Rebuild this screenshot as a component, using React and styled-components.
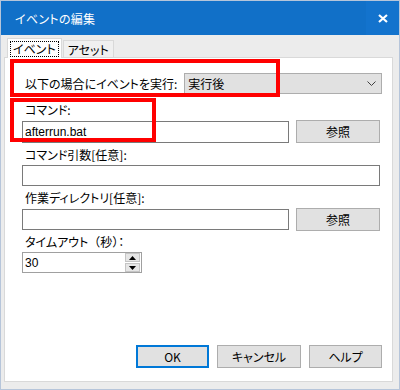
import React from "react";
import styled, { createGlobalStyle } from "styled-components";

const Global = createGlobalStyle`
  html, body { margin: 0; padding: 0; background: #ffffff; }
  body { font-family: "Noto Sans CJK JP", "Noto Sans", sans-serif; font-size: 12px; color: #000; }
  * { box-sizing: border-box; }
`;

const Window = styled.div`
  width: 400px;
  height: 390px;
  border: 1px solid #b6c5da;
  background: #ececec;
  display: flex;
  flex-direction: column;
`;

const TitleBar = styled.div`
  height: 34px;
  background: #1170c8;
  display: flex;
  align-items: center;
  justify-content: space-between;
  flex-shrink: 0;
`;

const Title = styled.div`
  color: #ffffff;
  font-size: 12px;
  padding-left: 14px;
  font-feature-settings: "palt";
  letter-spacing: 0.3px;
`;

const CloseBtn = styled.div`
  width: 33px;
  height: 34px;
  background: #1373cd;
  display: flex;
  align-items: center;
  justify-content: center;
`;

const Body = styled.div`
  flex: 1;
  display: flex;
  flex-direction: column;
  padding: 3px 6px 7px 3px;
`;

const Tabs = styled.div`
  display: flex;
  align-items: flex-end;
  height: 20px;
  padding-left: 3px;
  margin-bottom: -1px;
  position: relative;
  z-index: 1;
`;

const Tab = styled.div`
  height: ${(p) => (p.$active ? "20px" : "18px")};
  padding: ${(p) => (p.$active ? "2px 2px 1px" : "0 4px")};
  background: ${(p) => (p.$active ? "#ffffff" : "#f0f0f0")};
  border: 1px solid #d9d9d9;
  border-bottom: ${(p) => (p.$active ? "none" : "1px solid #d9d9d9")};
  margin-left: ${(p) => (p.$active ? "0" : "1px")};
  display: flex;
  align-items: center;
  font-size: 12px;
  font-feature-settings: "palt";
`;

const Focus = styled.span`
  border: 1px dotted #000;
  padding: 0 2px;
  line-height: 14px;
`;

const Panel = styled.div`
  flex: 1;
  background: #ffffff;
  border: 1px solid #d9d9d9;
  position: relative;
  display: flex;
  flex-direction: column;
  padding: 15px 10px 13px 17px;
`;

const Row = styled.div`
  display: flex;
  align-items: center;
  gap: ${(p) => p.$gap || 7}px;
  margin-top: ${(p) => p.$mt || 0}px;
`;

const Label = styled.div`
  font-size: 12px;
  line-height: 14px;
  padding-left: 3px;
  margin-top: ${(p) => p.$mt || 0}px;
  margin-bottom: ${(p) => p.$mb ?? 3}px;
  font-feature-settings: "palt";
  white-space: nowrap;
`;

const Wide = styled.span`
  font-feature-settings: normal;
`;

const Combo = styled.div`
  margin-left: auto;
  width: 198px;
  height: 21px;
  background: #e1e1e1;
  border: 1px solid #adadad;
  display: flex;
  align-items: center;
  justify-content: space-between;
  padding: 0 5px 0 3px;
  font-size: 12px;
`;

const Input = styled.div`
  width: ${(p) => p.$w}px;
  height: ${(p) => p.$h || 22}px;
  border: 1px solid #7a7a7a;
  background: #fff;
  display: flex;
  align-items: center;
  padding-left: 2px;
  font-family: "Liberation Sans", "Noto Sans", sans-serif;
  font-size: 12px;
`;

const Button = styled.div`
  width: ${(p) => p.$w}px;
  height: 23px;
  background: #e1e1e1;
  border: ${(p) => (p.$primary ? "2px solid #0078d7" : "1px solid #adadad")};
  display: flex;
  align-items: center;
  justify-content: center;
  font-size: 12px;
  font-feature-settings: "palt";
`;

const Spacer = styled.div`
  flex: 1;
`;

const Footer = styled.div`
  display: flex;
  justify-content: flex-end;
  gap: 8px;
  padding-right: 0;
`;

const Spin = styled.div`
  width: 120px;
  height: 21px;
  border: 1px solid #a0a0a0;
  background: #fff;
  display: flex;
  align-items: center;
  padding-left: 2px;
  font-family: "Liberation Sans", "Noto Sans", sans-serif;
  font-size: 12px;
`;

const SpinButtons = styled.div`
  margin-left: auto;
  width: 15px;
  height: 19px;
  display: flex;
  flex-direction: column;
  gap: 1px;
  margin-right: 1px;
`;

const SpinBtn = styled.div`
  flex: 1;
  background: #e6e6e6;
  border: 1px solid #c5c5c5;
  display: flex;
  align-items: center;
  justify-content: center;
`;

const Highlight = styled.div`
  position: absolute;
  left: ${(p) => p.$x}px;
  top: ${(p) => p.$y}px;
  width: ${(p) => p.$w}px;
  height: ${(p) => p.$h}px;
  border: 4px solid #ff0000;
  pointer-events: none;
`;

export default function App() {
  return (
    <>
      <Global />
      <Window>
        <TitleBar>
          <Title>イベントの編集</Title>
          <CloseBtn>
            <svg width="10" height="9" viewBox="0 0 10 9">
              <path d="M1 1 L9 8 M9 1 L1 8" stroke="#fff" strokeWidth="2.2" />
            </svg>
          </CloseBtn>
        </TitleBar>
        <Body>
          <Tabs>
            <Tab $active>
              <Focus>イベント</Focus>
            </Tab>
            <Tab>アセット</Tab>
          </Tabs>
          <Panel>
            <Row>
              <Label $mb={0}>以下の場合にイベントを実行:</Label>
              <Combo>
                <span>実行後</span>
                <svg width="9" height="6" viewBox="0 0 9 6">
                  <path d="M0.5 0.5 L4.5 4.5 L8.5 0.5" stroke="#404040" fill="none" strokeWidth="1" />
                </svg>
              </Combo>
            </Row>
            <Label $mt={9}>コマンド:</Label>
            <Row>
              <Input $w={267}>afterrun.bat</Input>
              <Button $w={84}>参照</Button>
            </Row>
            <Label $mt={5}>コマンド引数[任意]:</Label>
            <Input $w={358} $h={21} />
            <Label $mt={5}>作業ディレクトリ[任意]:</Label>
            <Row>
              <Input $w={267} $h={21} />
              <Button $w={84}>参照</Button>
            </Row>
            <Label $mt={4}>
              タイムアウト<Wide>（秒）</Wide>：
            </Label>
            <Spin>
              30
              <SpinButtons>
                <SpinBtn>
                  <svg width="7" height="4" viewBox="0 0 7 4">
                    <path d="M0 4 L3.5 0 L7 4 Z" fill="#000" />
                  </svg>
                </SpinBtn>
                <SpinBtn>
                  <svg width="7" height="4" viewBox="0 0 7 4">
                    <path d="M0 0 L3.5 4 L7 0 Z" fill="#000" />
                  </svg>
                </SpinBtn>
              </SpinButtons>
            </Spin>
            <Spacer />
            <Footer>
              <Button $w={73} $primary>OK</Button>
              <Button $w={84}>キャンセル</Button>
              <Button $w={73}>ヘルプ</Button>
            </Footer>
            <Highlight $x={5} $y={1} $w={270} $h={38} />
            <Highlight $x={5} $y={40} $w={146} $h={44} />
          </Panel>
        </Body>
      </Window>
    </>
  );
}
